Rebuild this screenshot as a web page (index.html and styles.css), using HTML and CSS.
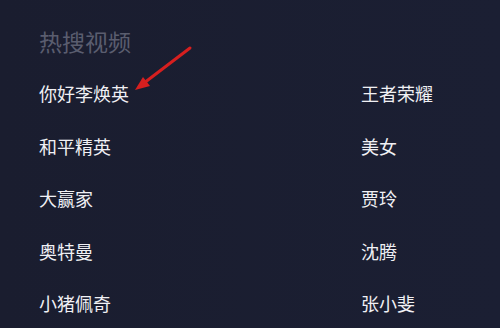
FILE: index.html
```html
<!DOCTYPE html>
<html lang="zh-CN">
<head>
  <meta charset="UTF-8">
  <title>热搜视频</title>
  <link rel="stylesheet" href="styles.css">
</head>
<body>
  <div class="panel">
    <h2 class="title">热搜视频</h2>
    <div class="list">
      <div class="item">你好李焕英</div>
      <div class="item">王者荣耀</div>
      <div class="item">和平精英</div>
      <div class="item">美女</div>
      <div class="item">大赢家</div>
      <div class="item">贾玲</div>
      <div class="item">奥特曼</div>
      <div class="item">沈腾</div>
      <div class="item">小猪佩奇</div>
      <div class="item">张小斐</div>
    </div>
    <svg class="arrow" width="500" height="328" viewBox="0 0 500 328">
      <line x1="190" y1="48" x2="144" y2="83" stroke="#d61f1f" stroke-width="3" stroke-linecap="round"/>
      <polygon points="135,90 150,86 143,77" fill="#d61f1f"/>
    </svg>
  </div>
</body>
</html>
```

FILE: styles.css
```css
html, body {
  margin: 0;
  height: 100%;
}
body {
  background: linear-gradient(90deg, #1a1d2f 0%, #1b1f33 100%);
  font-family: "Noto Sans CJK SC", "Noto Sans", sans-serif;
  overflow: hidden;
}
.panel {
  position: relative;
  padding: 25px 0 0 39px;
  height: 100%;
  box-sizing: border-box;
}
.title {
  margin: 0 0 10px;
  font-size: 23px;
  line-height: 32px;
  font-weight: 400;
  color: #5a5d6f;
}
.list {
  display: grid;
  grid-template-columns: 322px 1fr;
}
.item {
  font-size: 18px;
  line-height: 52.5px;
  font-weight: 400;
  color: #f0f0f4;
}
.arrow {
  position: absolute;
  left: 0;
  top: 0;
  pointer-events: none;
}
```
